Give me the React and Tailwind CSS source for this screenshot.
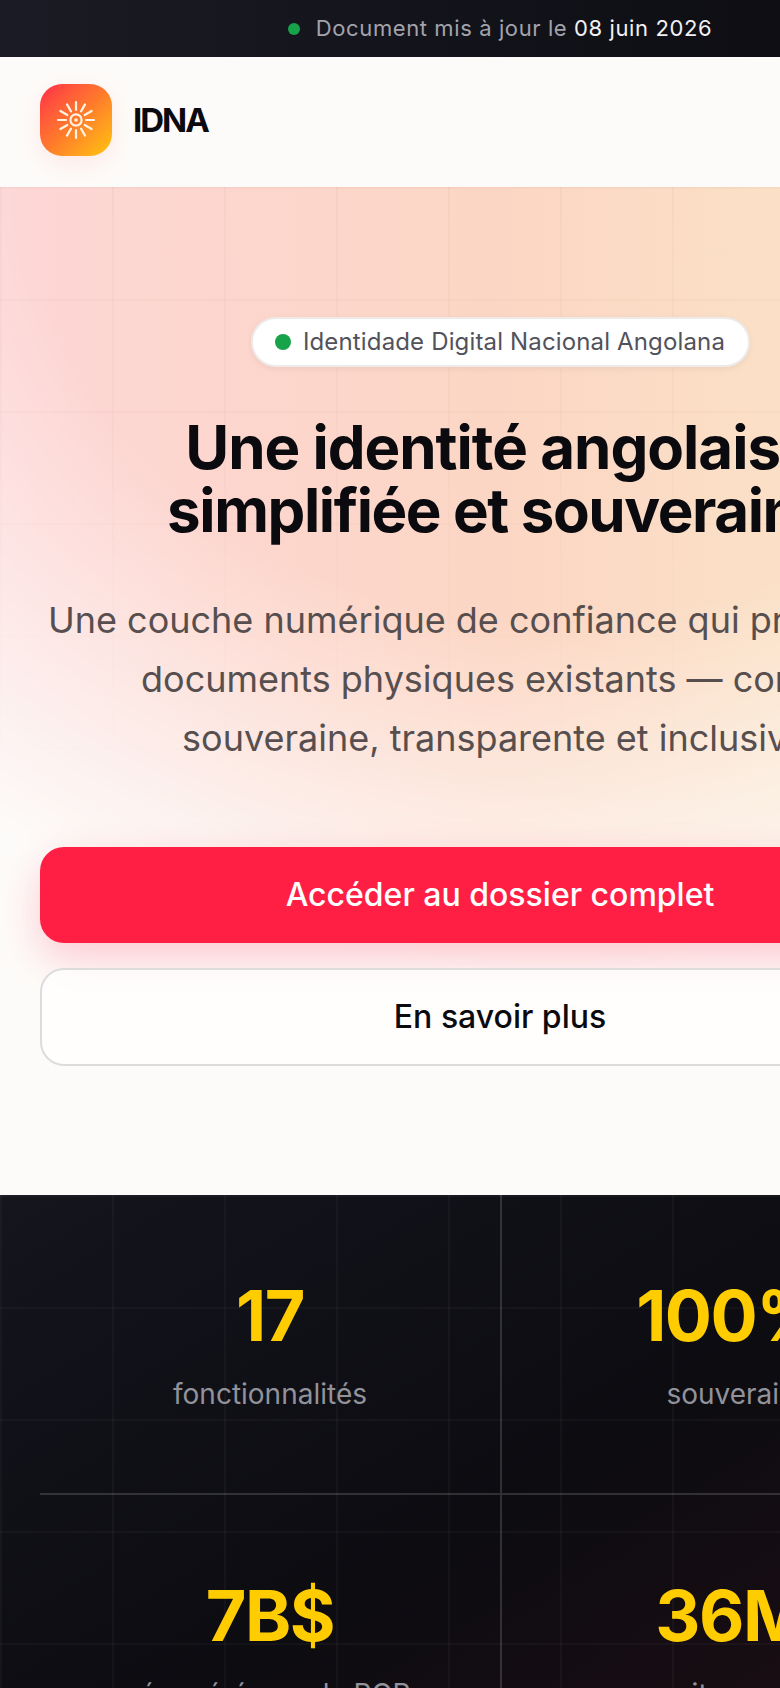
function SunMark() {
  const rays = Array.from({ length: 12 }, (_, i) => i * 30);
  return (
    <svg width="40" height="40" viewBox="0 0 40 40" fill="none" stroke="#fff3e4" strokeWidth="2.2" strokeLinecap="round">
      {rays.map((deg) => (
        <line key={deg} x1="20" y1="10" x2="20" y2="2" transform={`rotate(${deg} 20 20)`} />
      ))}
      <circle cx="20" cy="20" r="5.6" />
      <circle cx="20" cy="20" r="1.8" fill="#fff3e4" stroke="none" />
    </svg>
  );
}

function Stat({ value, label, className }) {
  return (
    <div className={`flex h-[300px] flex-col items-center pt-[84px] ${className}`}>
      <div className="text-[70px] leading-[74px] font-bold tracking-[-1.5px] text-[#ffcc00]">{value}</div>
      <div className="mt-[22px] text-[28px] leading-[38px] text-[#92929b]">{label}</div>
    </div>
  );
}

export default function App() {
  return (
    <div className="h-[1688px] w-[780px] overflow-hidden bg-[#0c0c11]">
      <div className="w-[1000px] font-['Inter',sans-serif]">
        {/* Status strip */}
        <div className="flex h-[57px] items-center justify-center gap-4 bg-gradient-to-r from-[#1a1b24] to-[#0a0a0f] text-[22px] tracking-[0.6px] text-[#a3a3ad]">
          <span className="h-3 w-3 rounded-full bg-[#16a34a]" />
          <span>
            Document mis à jour le <span className="text-[#f1f1f3]">08 juin 2026</span>
          </span>
        </div>

        {/* Nav */}
        <div className="flex h-[130px] items-center gap-[21px] bg-[#fdfbf9] px-10 pb-1">
          <div className="flex h-[72px] w-[72px] items-center justify-center rounded-[22px] bg-gradient-to-br from-[#ff1f45] via-[#ff7a2a] to-[#ffc400] shadow-[0_8px_24px_rgba(255,80,60,0.1)]">
            <SunMark />
          </div>
          <span className="text-[33px] leading-none font-bold tracking-[-2px] text-[#0a0a0f]">IDNA</span>
        </div>

        {/* Hero */}
        <div className="relative h-[1008px] overflow-hidden bg-[#fdfbf9]">
          <div className="absolute inset-0 bg-gradient-to-r from-[#fdd6d6] via-[#fcd6c4] to-[#f9e8c8] [mask-image:radial-gradient(ellipse_95%_78%_at_55%_0%,black_55%,transparent_100%)]" />
          <div className="absolute inset-0 bg-[linear-gradient(rgba(120,60,40,0.035)_2px,transparent_2px),linear-gradient(90deg,rgba(120,60,40,0.035)_2px,transparent_2px)] bg-[size:112px_112px] [mask-image:linear-gradient(to_bottom,black,transparent_60%)]" />

          <div className="relative flex flex-col items-center px-10 pt-[130px]">
            <div className="flex h-[50px] w-[499px] items-center justify-center gap-3 rounded-full border-2 border-[#eeeaea] bg-white text-[24px] tracking-[0.15px] text-[#52525b] shadow-[0_2px_6px_rgba(0,0,0,0.06)]">
              <span className="h-4 w-4 rounded-full bg-[#16a34a]" />
              Identidade Digital Nacional Angolana
            </div>
            <h1 className="mt-[49px] text-center text-[60px] leading-[63px] font-bold tracking-[-1px] text-[#0a0a0f]">
              Une identité angolaise
              <br />
              <span className="tracking-[-1.4px]">simplifiée et souveraine</span>
            </h1>
            <p className="mt-[49px] text-center text-[36px] leading-[59px] whitespace-nowrap text-[#574f4f]">
              Une couche numérique de confiance qui protège vos
              <br />
              documents physiques existants — conçue
              <br />
              souveraine, transparente et inclusive.
            </p>
            <button className="mt-[79px] flex h-[96px] w-full items-center justify-center rounded-[24px] bg-[#ff1f45] text-[32px] font-medium text-white shadow-[0_16px_40px_rgba(255,31,69,0.22)]">
              Accéder au dossier complet
            </button>
            <button className="mt-[25px] flex h-[98px] w-full items-center justify-center rounded-[24px] border-2 border-[#dcdcdc] bg-white/70 text-[32px] font-medium text-[#0a0a0f]">
              En savoir plus
            </button>
          </div>
        </div>

        {/* Stats */}
        <div className="relative bg-gradient-to-br from-[#14151d] via-[#0c0c11] to-[#1f0d14]">
          <div className="absolute inset-0 bg-[linear-gradient(rgba(255,255,255,0.03)_2px,transparent_2px),linear-gradient(90deg,rgba(255,255,255,0.03)_2px,transparent_2px)] bg-[size:112px_112px]" />
          <div className="relative grid grid-cols-2 px-10">
            <Stat value="17" label="fonctionnalités" className="border-b-2 border-white/15" />
            <Stat value="100%" label="souverain" className="border-b-2 border-l-2 border-white/15" />
            <Stat value="7B$" label="récupérés par le PGR" />
            <Stat value="36M" label="citoyens" className="border-l-2 border-white/15" />
          </div>
        </div>
      </div>
    </div>
  );
}
